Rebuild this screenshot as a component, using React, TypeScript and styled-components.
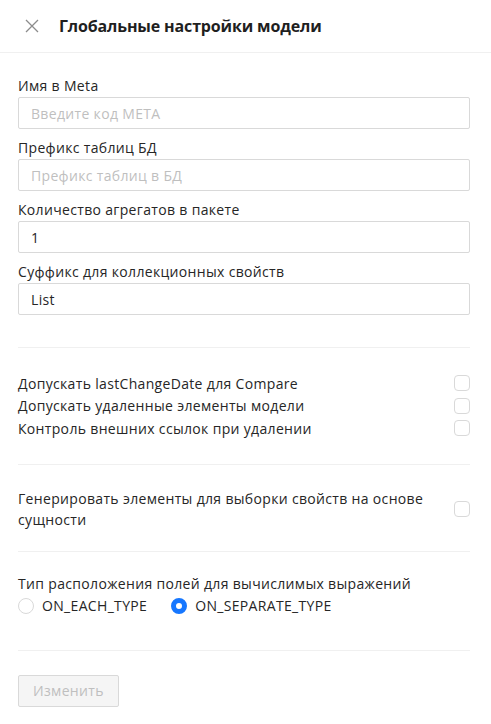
import React, { useState } from 'react';
import styled, { createGlobalStyle } from 'styled-components';

const GlobalStyle = createGlobalStyle`
  html, body {
    margin: 0;
    padding: 0;
    background: #ffffff;
  }
  body {
    font-family: 'Open Sans', 'Noto Sans', sans-serif;
    color: #262626;
  }
  * {
    box-sizing: border-box;
  }
`;

const Drawer = styled.div`
  width: 491px;
  min-height: 724px;
  background: #ffffff;
  display: flex;
  flex-direction: column;
`;

const Header = styled.div`
  height: 53px;
  display: flex;
  align-items: center;
  gap: 20px;
  padding: 0 20px 0 25px;
  border-bottom: 1px solid #f0f0f0;
`;

const CloseButton = styled.button`
  width: 14px;
  height: 14px;
  padding: 0;
  border: none;
  background: transparent;
  display: flex;
  align-items: center;
  justify-content: center;
  color: #8c8c8c;
  cursor: pointer;
`;

const Title = styled.h2`
  margin: 0;
  font-size: 16px;
  font-weight: 700;
  letter-spacing: -0.15px;
  color: #1f1f1f;
`;

const Body = styled.div`
  padding: 22px 21px 16px 18px;
  display: flex;
  flex-direction: column;
  letter-spacing: 0.33px;
`;

const Field = styled.div`
  display: flex;
  flex-direction: column;
  margin-bottom: 8px;
`;

const Label = styled.label`
  font-size: 14px;
  line-height: 22px;
  color: #262626;
`;

const Input = styled.input`
  height: 32px;
  width: 100%;
  padding: 0 12px;
  border: 1px solid #d9d9d9;
  border-radius: 2px;
  font-family: inherit;
  font-size: 14px;
  letter-spacing: 0.33px;
  color: #262626;
  outline: none;

  &::placeholder {
    color: #bfbfbf;
  }
`;

const Divider = styled.hr<{ $top: number; $bottom: number }>`
  border: none;
  border-top: 1px solid #f0f0f0;
  margin: ${p => p.$top}px 0 ${p => p.$bottom}px;
`;

const CheckRow = styled.label`
  display: flex;
  align-items: center;
  justify-content: space-between;
  gap: 24px;
  font-size: 14px;
  line-height: 21px;
  min-height: 22.5px;
  cursor: pointer;
`;

const CheckText = styled.span`
  flex: 1;
`;

const Box = styled.span<{ $checked: boolean }>`
  width: 16px;
  height: 16px;
  flex-shrink: 0;
  border: 1px solid #d9d9d9;
  border-radius: 4px;
  background: ${p => (p.$checked ? '#1677ff' : '#ffffff')};
`;

const RadioGroup = styled.div`
  display: flex;
  align-items: center;
  gap: 24px;
`;

const RadioOption = styled.label`
  display: flex;
  align-items: center;
  gap: 8px;
  font-size: 14px;
  line-height: 22px;
  cursor: pointer;
`;

const RadioDot = styled.span<{ $checked: boolean }>`
  width: 16px;
  height: 16px;
  border-radius: 50%;
  border: ${p => (p.$checked ? '5px solid #1677ff' : '1px solid #d9d9d9')};
  background: #ffffff;
`;

const SubmitButton = styled.button`
  align-self: flex-start;
  height: 32px;
  padding: 0 14px;
  border: 1px solid #d9d9d9;
  border-radius: 2px;
  background: #f5f5f5;
  color: #bfbfbf;
  font-family: inherit;
  font-size: 14px;
  letter-spacing: 0.33px;
  cursor: not-allowed;
`;

const flags = [
  'Допускать lastChangeDate для Compare',
  'Допускать удаленные элементы модели',
  'Контроль внешних ссылок при удалении',
];

const App: React.FC = () => {
  const [checks, setChecks] = useState<boolean[]>([false, false, false, false]);
  const [layout, setLayout] = useState<string>('ON_SEPARATE_TYPE');

  const toggle = (i: number) => setChecks(c => c.map((v, j) => (j === i ? !v : v)));

  return (
    <Drawer>
      <GlobalStyle />
      <Header>
        <CloseButton aria-label="close">
          <svg width="14" height="14" viewBox="0 0 14 14" fill="none" stroke="currentColor" strokeWidth="1.3">
            <path d="M1 1 L13 13 M13 1 L1 13" />
          </svg>
        </CloseButton>
        <Title>Глобальные настройки модели</Title>
      </Header>
      <Body>
        <Field>
          <Label>Имя в Meta</Label>
          <Input placeholder="Введите код META" />
        </Field>
        <Field>
          <Label>Префикс таблиц БД</Label>
          <Input placeholder="Префикс таблиц в БД" />
        </Field>
        <Field>
          <Label>Количество агрегатов в пакете</Label>
          <Input defaultValue="1" />
        </Field>
        <Field>
          <Label>Суффикс для коллекционных свойств</Label>
          <Input defaultValue="List" />
        </Field>

        <Divider $top={24} $bottom={24} />

        {flags.map((f, i) => (
          <CheckRow key={f} onClick={() => toggle(i)}>
            <CheckText>{f}</CheckText>
            <Box $checked={checks[i]} />
          </CheckRow>
        ))}

        <Divider $top={24} $bottom={23} />

        <CheckRow onClick={() => toggle(3)}>
          <CheckText>Генерировать элементы для выборки свойств на основе сущности</CheckText>
          <Box $checked={checks[3]} />
        </CheckRow>

        <Divider $top={21} $bottom={21} />

        <Label>Тип расположения полей для вычислимых выражений</Label>
        <RadioGroup>
          {['ON_EACH_TYPE', 'ON_SEPARATE_TYPE'].map(v => (
            <RadioOption key={v} onClick={() => setLayout(v)}>
              <RadioDot $checked={layout === v} />
              {v}
            </RadioOption>
          ))}
        </RadioGroup>

        <Divider $top={33} $bottom={24} />

        <SubmitButton disabled>Изменить</SubmitButton>
      </Body>
    </Drawer>
  );
};

export default App;
